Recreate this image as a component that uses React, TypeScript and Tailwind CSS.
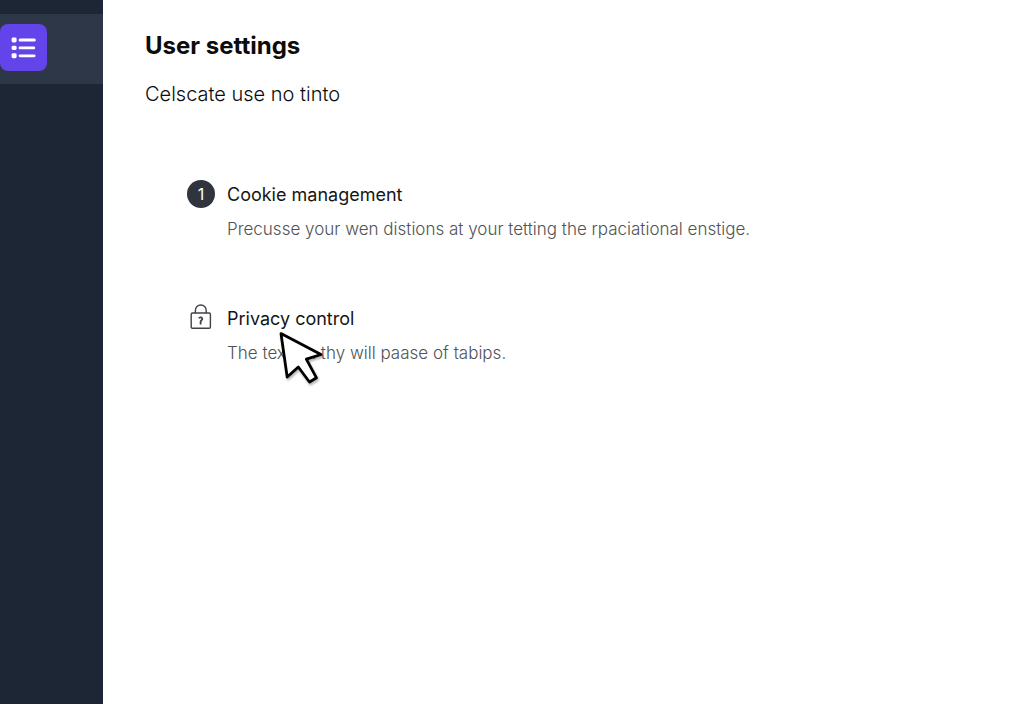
import type { ReactNode } from 'react';

const ListIcon = () => (
  <svg viewBox="0 0 26 24" className="w-[26px] h-6" fill="white" aria-hidden="true">
    <rect x="0.6" y="1.6" width="5" height="4.8" rx="1.4" />
    <rect x="0.6" y="9.8" width="5" height="4.2" rx="1.4" />
    <rect x="0.6" y="17.2" width="5" height="5" rx="1.4" />
    <rect x="7.6" y="2.4" width="17.2" height="3" rx="1.5" />
    <rect x="7.6" y="10.6" width="16.6" height="2.6" rx="1.3" />
    <rect x="7.6" y="18.4" width="17" height="2.8" rx="1.4" />
  </svg>
);

const LockIcon = () => (
  <svg viewBox="0 0 28 28" className="w-7 h-7" fill="none" stroke="#3f4246" strokeWidth="1.4" aria-hidden="true">
    <rect x="4.2" y="9" width="19.2" height="15.2" rx="1.2" />
    <path d="M8.4 9V6.4a5.4 5.4 0 0 1 10.8 0V9" />
    <path d="M12 14.4c.6-1.6 3.6-1.2 3.2.8-.2 1-1.4 1.4-1.6 2.4v2.8" strokeWidth="1.8" />
  </svg>
);

const Cursor = () => (
  <svg
    viewBox="0 0 46 56"
    className="absolute left-[51px] top-[26px] w-[46px] h-14 drop-shadow-[1px_2px_1px_rgba(0,0,0,0.3)]"
    aria-hidden="true"
  >
    <path
      d="M3 3.6 43 24.5 28.3 29.2 38.5 47.8 31.5 52 20.3 37 9.2 47Z"
      fill="white"
      stroke="black"
      strokeWidth="2.8"
      strokeLinejoin="round"
    />
  </svg>
);

type SettingProps = {
  icon: ReactNode;
  title: string;
  text: string;
  children?: ReactNode;
};

const Setting = ({ icon, title, text, children }: SettingProps) => (
  <li className="flex gap-3">
    <div className="shrink-0">{icon}</div>
    <div className="relative">
      <h2 className="text-lg leading-[30px] text-[#151515]">{title}</h2>
      <p className="mt-1.5 text-[17px] leading-[26px] font-light text-[#505355]">{text}</p>
      {children}
    </div>
  </li>
);

const App = () => {
  return (
    <div className="flex min-h-screen bg-white font-['Inter',sans-serif]">
      <nav className="w-[103px] shrink-0 bg-[#1d2635] pt-3.5" aria-label="Main">
        <div className="flex h-[70px] items-start bg-[#2d3748] pt-2.5">
          <button
            type="button"
            aria-label="Settings"
            className="flex h-[47px] w-[47px] items-center justify-center rounded-lg bg-[#6244ea]"
          >
            <ListIcon />
          </button>
        </div>
      </nav>

      <main className="flex-1 px-[42px] pt-[30px]">
        <h1 className="text-2xl leading-8 font-bold text-[#0c0c0c]">User settings</h1>
        <p className="mt-4 text-xl leading-8 font-light text-[#0c0c0c]">Celscate use no tinto</p>

        <ul className="mt-[70px] space-y-[62px] pl-[42px]">
          <Setting
            icon={
              <span className="flex h-7 w-7 items-center justify-center rounded-full bg-[#30343d] text-base text-white">
                1
              </span>
            }
            title="Cookie management"
            text="Precusse your wen distions at your tetting the rpaciational enstige."
          />
          <Setting icon={<LockIcon />} title="Privacy control" text="The text on thy will paase of tabips.">
            <Cursor />
          </Setting>
        </ul>
      </main>
    </div>
  );
};

export default App;
